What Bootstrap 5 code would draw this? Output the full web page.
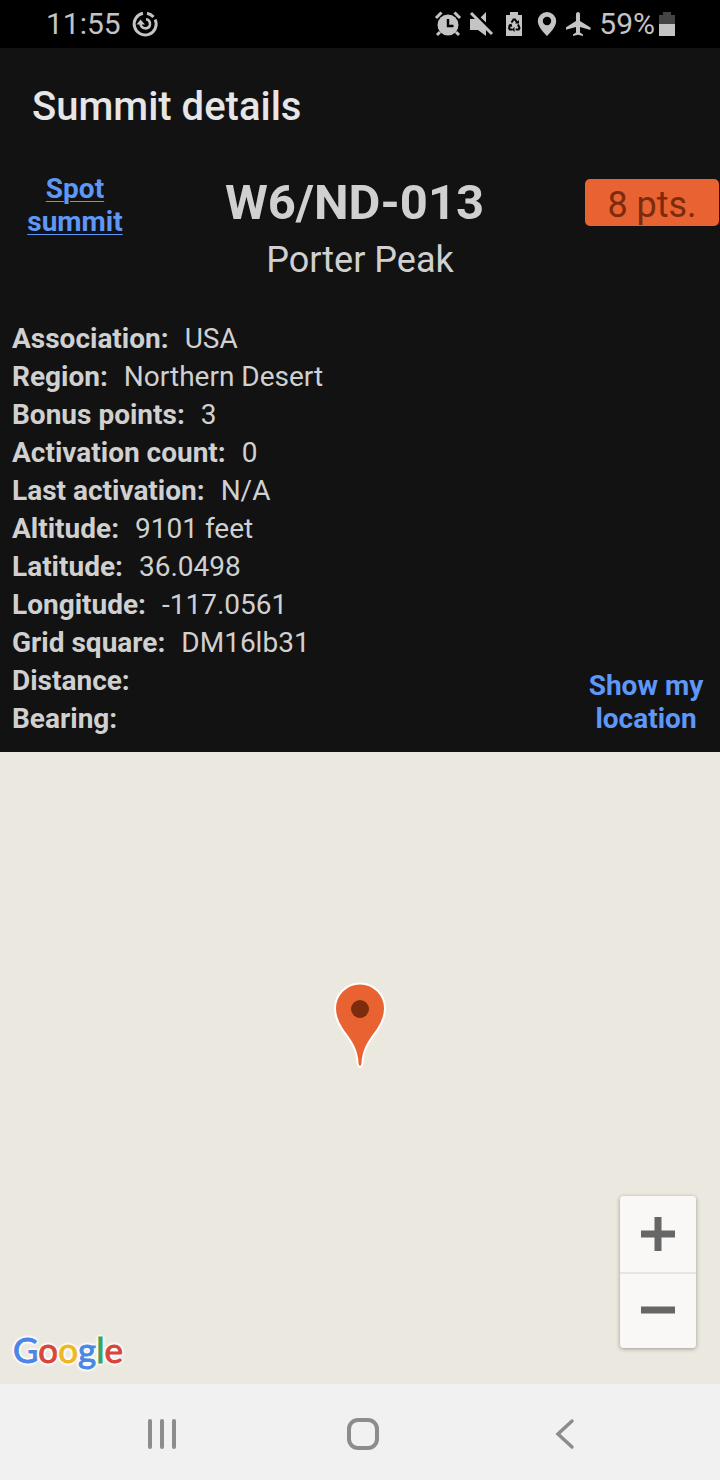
<!DOCTYPE html>
<html lang="en">
<head>
<meta charset="utf-8">
<meta name="viewport" content="width=device-width, initial-scale=1">
<title>Summit details</title>
<link href="https://cdn.jsdelivr.net/npm/bootstrap@5.3.0/dist/css/bootstrap.min.css" rel="stylesheet">
<style>
body { font-family: Roboto, "Liberation Sans", sans-serif; font-size: 28px; line-height: 38px; background: #121212; color: #d0d0d0; }
.status-bar { height: 48px; padding: 0 41px 0 46px; background: #000; color: #c4c4c4; font-size: 30px; line-height: 50px; }
.status-icons { gap: 5px; }
.page-title { padding: 33px 32px 27px; font-size: 40px; line-height: 52px; font-weight: 500; color: #e6e6e6; }
.summit-head { padding-top: 12px; }
.side-col { width: 150px; }
.action { color: #5e97f6; font-weight: 700; line-height: 33px; }
.action:hover { color: #8ab4f8; }
.spot-link { text-decoration: underline; text-decoration-thickness: 1px; text-underline-offset: 3px; }
.summit-ref { font-size: 49px; line-height: 62px; font-weight: 700; }
.summit-name { padding-bottom: 38px; font-size: 36px; line-height: 44px; }
.points { width: 134px; height: 47px; margin: 7px 1px 0 26px; padding-top: 4px; border-radius: 5px; background: #e96232; color: #7c2b0d; font-size: 36px; line-height: 44px; }
.facts { padding: 0 12px 14px; }
.facts dt { margin-right: 16px; font-weight: 700; }
.locate { width: 120px; right: 14px; bottom: 17px; }
.map { background: #ebe8df; min-height: 400px; }
.map-pin { margin-bottom: 88px; }
.zoom-box { right: 24px; bottom: 36px; width: 76px; border-radius: 4px; box-shadow: 0 1px 4px rgba(0,0,0,.35); }
.zoom-box button { height: 76px; background: #f9f8f6; border: 0; border-radius: 4px 4px 0 0; }
.zoom-box button + button { border-top: 2px solid #e6e5e3; border-radius: 0 0 4px 4px; }
.brand { left: 13px; bottom: 12px; font-family: Lato, "Liberation Sans", sans-serif; font-size: 35px; line-height: 46px; -webkit-text-stroke: 1px currentColor;
  text-shadow: 0 0 2px #fff, 2px 0 2px #fff, -2px 0 2px #fff, 0 2px 2px #fff, 0 -2px 2px #fff, 0 0 4px #fff; }
.g-blue { color: #4a85e8; } .g-red { color: #d6463c; } .g-yellow { color: #f0b724; } .g-green { color: #3ba35a; }
.nav-keys { height: 96px; padding: 4px 55px 0 61px; background: #f1f1f1; }
svg { display: block; }
</style>
</head>
<body>
<div class="d-flex flex-column min-vh-100">
  <div class="status-bar d-flex align-items-center justify-content-between">
    <div class="d-flex align-items-center gap-2">
      <span>11:55</span>
      <svg width="32" height="32" viewBox="0 0 32 32" fill="none" stroke="#c4c4c4" stroke-width="3">
        <path d="M14 5.200A11 11 0 1 0 26.200 11.500M18 5.200A11 11 0 0 1 24.500 9"/>
        <path d="M11.500 15.500C12 21.500 20 22 21 16.500C21.300 13.500 19.500 11.500 17 11.300" stroke-width="2.600"/>
        <path d="M7.500 16.500l4-5 4.500 5z" fill="#c4c4c4" stroke="none"/>
      </svg>
    </div>
    <div class="status-icons d-flex align-items-center">
      <svg width="28" height="28" viewBox="0 0 28 28"><path d="M6 22l-3 3M22 22l3 3" stroke="#c4c4c4" stroke-width="3"/><circle cx="14" cy="15" r="10.500" fill="#c4c4c4"/><path d="M2 8L7.500 2.500M26 8L20.500 2.500" stroke="#c4c4c4" stroke-width="3"/><path d="M14 9v7h5.500" fill="none" stroke="#000" stroke-width="2.400"/></svg>
      <svg width="28" height="28" viewBox="0 0 28 28" fill="#c4c4c4"><path d="M3 9H9L19 19V26L11 20H3zM19 2v10.500l-5.500-5z"/><path d="M6.500 2L27.500 23" stroke="#000" stroke-width="2"/><path d="M4 3L25 24" stroke="#c4c4c4" stroke-width="3"/></svg>
      <svg width="28" height="28" viewBox="0 0 28 28"><path d="M6 5h4V2h8v3h4v21H6z" fill="#c4c4c4"/><g fill="none" stroke="#000" stroke-width="2"><path d="M11.500 12.500l2-3h1.500l2 3"/><path d="M10.500 14.500L9 18l.8 1.500H12.500"/><path d="M18 14.500l1.500 3.500-.8 1.500h-3"/></g><path d="M14.500 17v5l-2.500-2.500zM15 13.500h4V10zM8 15.500l3.500-2 .8 3.500z"/></svg>
      <svg width="28" height="28" viewBox="0 0 28 28"><path fill="#c4c4c4" fill-rule="evenodd" d="M14 2a9.200 9.200 0 0 0-9.200 9.200C4.800 17.500 14 26 14 26s9.200-8.500 9.200-14.800A9.200 9.200 0 0 0 14 2zm0 4.800a4.200 4.200 0 1 1 0 8.400 4.200 4.200 0 0 1 0-8.400z"/></svg>
      <svg width="28" height="28" viewBox="0 0 28 28"><path fill="#c4c4c4" d="M12 2c-1.200 0-2 1-2 2.500V11L-.500 17.500V20l10.500-3v5.500l-3 2V26l5-1.200 5 1.200v-1.500l-3-2V17l10.500 3v-2.500L14 11V4.500C14 3 13.200 2 12 2z"/></svg>
      <div class="d-flex align-items-center"><span>59%</span>
      <svg width="24" height="28" viewBox="0 0 24 28"><path d="M4 5h4V2h8v3h4v9H4z" fill="#444"/><path d="M4 14h16v12H4z" fill="#c4c4c4"/></svg></div>
    </div>
  </div>

  <header><h1 class="page-title m-0">Summit details</h1></header>

  <main class="d-flex flex-column flex-grow-1">
    <section>
      <div class="summit-head d-flex align-items-start">
        <div class="side-col text-center"><a class="action spot-link d-block" href="#spot">Spot<br>summit</a></div>
        <h2 class="summit-ref flex-grow-1 text-center m-0">W6/ND-013</h2>
        <div class="points text-center">8 pts.</div>
      </div>
      <div class="summit-name text-center">Porter Peak</div>
    </section>

    <section class="position-relative">
      <dl class="facts m-0">
        <div class="d-flex"><dt>Association:</dt><dd class="m-0">USA</dd></div>
        <div class="d-flex"><dt>Region:</dt><dd class="m-0">Northern Desert</dd></div>
        <div class="d-flex"><dt>Bonus points:</dt><dd class="m-0">3</dd></div>
        <div class="d-flex"><dt>Activation count:</dt><dd class="m-0">0</dd></div>
        <div class="d-flex"><dt>Last activation:</dt><dd class="m-0">N/A</dd></div>
        <div class="d-flex"><dt>Altitude:</dt><dd class="m-0">9101 feet</dd></div>
        <div class="d-flex"><dt>Latitude:</dt><dd class="m-0">36.0498</dd></div>
        <div class="d-flex"><dt>Longitude:</dt><dd class="m-0">-117.0561</dd></div>
        <div class="d-flex"><dt>Grid square:</dt><dd class="m-0">DM16lb31</dd></div>
        <div class="d-flex"><dt>Distance:</dt><dd class="m-0"></dd></div>
        <div class="d-flex"><dt>Bearing:</dt><dd class="m-0"></dd></div>
      </dl>
      <button type="button" class="action locate position-absolute border-0 bg-transparent p-0 text-center">Show my location</button>
    </section>

    <section class="map position-relative flex-grow-1 d-flex align-items-center justify-content-center" aria-label="Map">
      <svg class="map-pin" width="60" height="88" viewBox="0 0 60 88" role="img" aria-label="Porter Peak">
        <path d="M30 3.500A25 25 0 0 0 5 28.500C5 36 8 43 12 49C18 58 27 67 27.500 83Q28 87 30 87Q32 87 32.500 83C33 67 42 58 48 49C52 43 55 36 55 28.500A25 25 0 0 0 30 3.500z" fill="#e96232" stroke="#fff" stroke-width="2"/>
        <circle cx="30" cy="29" r="9" fill="#7c2b0d"/>
      </svg>
      <div class="brand position-absolute" aria-label="Google"><span class="g-blue">G</span><span class="g-red">o</span><span class="g-yellow">o</span><span class="g-blue">g</span><span class="g-green">l</span><span class="g-red">e</span></div>
      <div class="zoom-box position-absolute d-flex flex-column">
        <button type="button" class="p-0 d-flex align-items-center justify-content-center" aria-label="Zoom in"><svg width="34" height="34" viewBox="0 0 34 34"><path d="M0 17h34M17 0v34" stroke="#666" stroke-width="7"/></svg></button>
        <button type="button" class="p-0 d-flex align-items-center justify-content-center" aria-label="Zoom out"><svg width="34" height="34" viewBox="0 0 34 34"><path d="M0 16h34" stroke="#666" stroke-width="7"/></svg></button>
      </div>
    </section>
  </main>

  <nav class="nav-keys d-flex" aria-label="System">
    <button type="button" class="flex-fill border-0 bg-transparent p-0 d-flex align-items-center justify-content-center" aria-label="Recent apps"><svg width="34" height="34" viewBox="0 0 34 34"><path d="M5 4v26M17 4v26M29 4v26" stroke="#8c8c8c" stroke-width="4" stroke-linecap="round"/></svg></button>
    <button type="button" class="flex-fill border-0 bg-transparent p-0 d-flex align-items-center justify-content-center" aria-label="Home"><svg width="34" height="34" viewBox="0 0 34 34"><rect x="3" y="3" width="28" height="28" rx="9" fill="none" stroke="#8c8c8c" stroke-width="4"/></svg></button>
    <button type="button" class="flex-fill border-0 bg-transparent p-0 d-flex align-items-center justify-content-center" aria-label="Back"><svg width="34" height="34" viewBox="0 0 34 34"><path d="M25 4L11 17l14 13" fill="none" stroke="#8c8c8c" stroke-width="3.500" stroke-linecap="round"/></svg></button>
  </nav>
</div>
<script src="https://cdn.jsdelivr.net/npm/bootstrap@5.3.0/dist/js/bootstrap.bundle.min.js"></script>
</body>
</html>
